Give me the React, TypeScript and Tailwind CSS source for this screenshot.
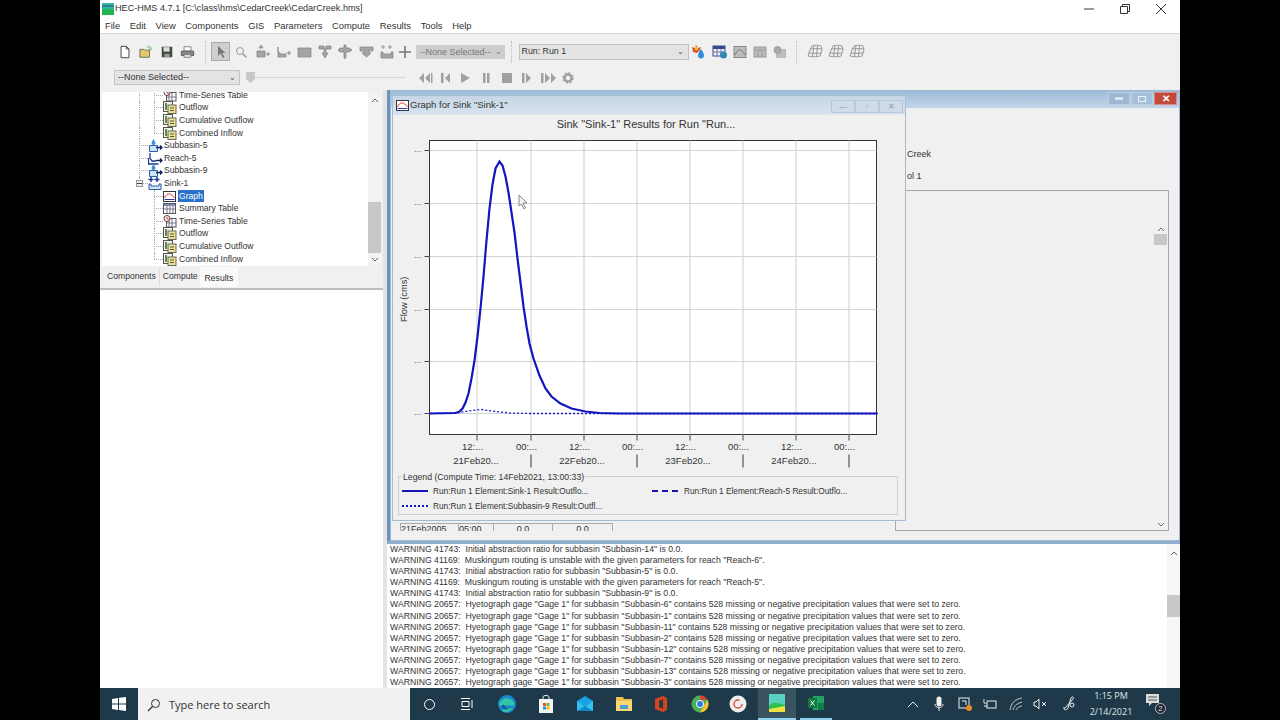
import React from "react";

const F = "font-['Liberation_Sans',Arial,sans-serif]";

const grayIcons = [
  "M6 1l2 3H4zM2 7h8v6H2zM10 10h4M12.500 8l2 2-2 2",
  "M2 3v5h1l2 2h5v3H2zM10 9h4M12.500 7l2 2-2 2",
  "M2 4h13v9H2z",
  "M2 2h5v2h2V2h5v3H9v4h2l-3 5-3-5h2V5H2z",
  "M7 1v3H3L1 6l2 2h4v5l1 2 1-2V8h3l3-2-3-2H9V1z",
  "M2 3h13v4H11v2h2l-4.500 4L4 9h2V7H2z",
  "M4 1v4M2 3h4M11 1v4M9 3h4M2 8h2v2h8V8h2v6H2z",
];

function DocIcon() {
  return (
    <svg width="14" height="13" viewBox="0 0 14 13" className="shrink-0">
      <rect x="0.5" y="0.5" width="9" height="10" fill="#f4f4e8" stroke="#555" />
      <rect x="2" y="2" width="2" height="7" fill="#5d8a5d" />
      <rect x="5" y="4" width="8" height="8.5" fill="#ece48c" stroke="#666" />
      <path d="M7 7h4M7 9.500h4" stroke="#555" />
    </svg>
  );
}
function GraphIcon() {
  return (
    <svg width="14" height="13" viewBox="0 0 14 13" className="shrink-0">
      <rect x="0.5" y="1.500" width="12" height="10" fill="#fff" stroke="#334" />
      <path d="M1.500 8C4 2 8 3 11.500 8" stroke="#d33" fill="none" />
      <path d="M1.500 9.500h10" stroke="#33a" />
    </svg>
  );
}
function TableIcon() {
  return (
    <svg width="14" height="13" viewBox="0 0 14 13" className="shrink-0">
      <rect x="0.5" y="1.500" width="12" height="10" fill="#fff" stroke="#556" />
      <rect x="1" y="2" width="11" height="2" fill="#7c8cab" />
      <path d="M4 4v7M7 4v7M10 4v7M1 7h11" stroke="#778" />
    </svg>
  );
}
function TimeIcon() {
  return (
    <svg width="14" height="13" viewBox="0 0 14 13" className="shrink-0">
      <rect x="3.500" y="3.500" width="9.500" height="8.500" fill="#fff" stroke="#556" />
      <path d="M6 4v8M9 4v8M3 8h10" stroke="#778" />
      <circle cx="4" cy="3.500" r="3" fill="#fff" stroke="#633" />
      <path d="M4 2v2h2" stroke="#c33" fill="none" />
    </svg>
  );
}
function ElemIcon({ kind }: { kind: "sub" | "reach" | "sink" }) {
  return (
    <svg width="15" height="13" viewBox="0 0 15 13" className="shrink-0">
      {kind === "sub" && <path d="M5.500 0C4.500 2 3.500 3 3.500 4a2 2 0 0 0 4 0C7.500 3 6.500 2 5.500 0z" fill="#3a8fdc" />}
      {kind === "sink" && <path d="M3 0v5M.5 2.500h5M9 0v5M6.500 2.500h5" stroke="#123a8a" strokeWidth="1.400" />}
      {kind === "reach" ? (
        <path d="M2 1v5l2 3h4M0.500 6v6h10" stroke="#16398c" strokeWidth="1.300" fill="none" />
      ) : kind === "sub" ? (
        <path d="M1.500 6.500v6h8v-6z" fill="#cfe4f6" stroke="#2d5fa8" />
      ) : (
        <path d="M1 7v5.500h12V7h-2v2H3V7z" fill="#cfe4f6" stroke="#2d5fa8" />
      )}
      {kind !== "sink" && <path d="M8 8.500h6M12 6.500l2 2-2 2" stroke="#10205e" strokeWidth="1.300" fill="none" />}
    </svg>
  );
}

function Leaf({ label, icon, sel, last, outer }: { label: string; icon: React.ReactNode; sel?: boolean; last?: boolean; outer?: boolean }) {
  return (
    <div className="h-[12.6px] flex items-center pl-[52px] relative">
      {outer && <span className="absolute left-[37px] top-0 bottom-0 border-l border-dotted border-[#aaa]" />}
      <span className={last ? "absolute left-[52px] top-0 h-1/2 border-l border-dotted border-[#aaa]" : "absolute left-[52px] top-0 bottom-0 border-l border-dotted border-[#aaa]"} />
      <span className="w-[9px] border-b border-dotted border-[#aaa] shrink-0" />
      {icon}
      <span className={sel ? "ml-[1px] px-[1px] bg-[#2a6fc9] text-white leading-[12px]" : "ml-[1px] px-[1px]"}>{label}</span>
    </div>
  );
}
function Elem({ label, kind, exp }: { label: string; kind: "sub" | "reach" | "sink"; exp?: boolean }) {
  return (
    <div className="h-[12.6px] flex items-center pl-[37px] relative">
      <span className={exp ? "absolute left-[37px] top-0 h-1/2 border-l border-dotted border-[#aaa]" : "absolute left-[37px] top-0 bottom-0 border-l border-dotted border-[#aaa]"} />
      {exp ? (
        <span className="absolute left-[34px] w-[7px] h-[7px] border border-[#999] bg-[#eee] flex items-center justify-center">
          <span className="w-[5px] h-px bg-[#444]" />
        </span>
      ) : null}
      <span className="w-[9px] border-b border-dotted border-[#aaa] shrink-0" />
      <ElemIcon kind={kind} />
      <span className="ml-[1px]">{label}</span>
    </div>
  );
}

const WARN = [
  'WARNING 41743:  Initial abstraction ratio for subbasin "Subbasin-14" is 0.0.',
  'WARNING 41169:  Muskingum routing is unstable with the given parameters for reach "Reach-6".',
  'WARNING 41743:  Initial abstraction ratio for subbasin "Subbasin-5" is 0.0.',
  'WARNING 41169:  Muskingum routing is unstable with the given parameters for reach "Reach-5".',
  'WARNING 41743:  Initial abstraction ratio for subbasin "Subbasin-9" is 0.0.',
  'WARNING 20657:  Hyetograph gage "Gage 1" for subbasin "Subbasin-6" contains 528 missing or negative precipitation values that were set to zero.',
  'WARNING 20657:  Hyetograph gage "Gage 1" for subbasin "Subbasin-1" contains 528 missing or negative precipitation values that were set to zero.',
  'WARNING 20657:  Hyetograph gage "Gage 1" for subbasin "Subbasin-11" contains 528 missing or negative precipitation values that were set to zero.',
  'WARNING 20657:  Hyetograph gage "Gage 1" for subbasin "Subbasin-2" contains 528 missing or negative precipitation values that were set to zero.',
  'WARNING 20657:  Hyetograph gage "Gage 1" for subbasin "Subbasin-12" contains 528 missing or negative precipitation values that were set to zero.',
  'WARNING 20657:  Hyetograph gage "Gage 1" for subbasin "Subbasin-7" contains 528 missing or negative precipitation values that were set to zero.',
  'WARNING 20657:  Hyetograph gage "Gage 1" for subbasin "Subbasin-13" contains 528 missing or negative precipitation values that were set to zero.',
  'WARNING 20657:  Hyetograph gage "Gage 1" for subbasin "Subbasin-3" contains 528 missing or negative precipitation values that were set to zero.',
];

const CURVE =
  "M0 273L26 272.500L30 271L33 268L36 262L39 253L42 238L45 220L48 196L51 168L54 136L57 100L60 68L63 44L66 28L70 21L73 25L76 36L79 52L82 72L85 92L88 118L91 142L94 166L97 186L100 203L104 218L110 235L116 248L122 256L131 263L142 268L156 271L170 272.500L190 273L448 273";
const DOT = "M0 273L30 272L42 270L52 269L62 270.500L80 272.500L100 273L448 273";

function Chart() {
  const vx = [47.5, 101.5, 154.5, 207.5, 260.5, 313.5, 366.5, 419.5];
  const hy = [10, 63, 116, 169, 221, 273];
  return (
    <svg width="512" height="336" viewBox="0 0 512 336" className="block">
      <g transform="translate(36.5,0.5)">
        <rect x="0" y="0" width="447" height="294" fill="#fff" stroke="#333" />
        {vx.map((x) => (
          <path key={x} d={`M${x} 0V294`} stroke="#cccccc" />
        ))}
        {hy.map((y) => (
          <path key={y} d={`M0 ${y}H447`} stroke="#d4d4d4" />
        ))}
        <path d={DOT} stroke="#1a1ad0" fill="none" strokeWidth="1.300" strokeDasharray="2 2" />
        <path d={CURVE} stroke="#1414c0" fill="none" strokeWidth="2.200" />
        {vx.map((x) => (
          <path key={x} d={`M${x} 294v6`} stroke="#444" />
        ))}
        {hy.map((y) => (
          <path key={y} d={`M-5 ${y}H0`} stroke="#444" />
        ))}
        {[101.5, 207.5, 313.5, 419.5].map((x) => (
          <path key={x} d={`M${x} 314v13`} stroke="#333" />
        ))}
      </g>
      <g fontFamily="'Liberation Sans',Arial,sans-serif" fontSize="9.500" fill="#333">
        {hy.map((y) => (
          <text key={y} x="21" y={y + 2} fontSize="9" fill="#666">...</text>
        ))}
        {vx.map((x, i) => (
          <text key={x} x={x + 36} y="310" textAnchor="middle" dx="-4">
            {i % 2 ? "00:..." : "12:..."}
          </text>
        ))}
        {["21Feb20...", "22Feb20...", "23Feb20...", "24Feb20..."].map((t, i) => (
          <text key={t} x={[83, 189, 295, 401][i]} y="324" textAnchor="middle">{t}</text>
        ))}
        <text transform="translate(14,182) rotate(-90)" fontSize="9.300">Flow (cms)</text>
      </g>
    </svg>
  );
}

function WinBtns() {
  return (
    <div className="flex items-start h-[13px] gap-px">
      <span className="w-[22px] h-[13px] bg-[#9cb8d4] border border-[#bcd0e2] flex items-center justify-center">
        <span className="w-[8px] h-[3px] bg-[#dbe5ee]" />
      </span>
      <span className="w-[22px] h-[13px] bg-[#a4bfd9] border border-[#bcd0e2] flex items-center justify-center">
        <span className="w-[8px] h-[6px] border border-[#eef3f8]" />
      </span>
      <span className="w-[23px] h-[13px] bg-[#c24a3a] border border-[#d88] flex items-center justify-center text-white text-[10px] font-bold leading-none">✕</span>
    </div>
  );
}

function ToolbarA() {
  return (
    <div className="h-[35px] flex items-center pl-[17px]">
      <svg width="14" height="14" viewBox="0 0 16 16" className="ml-[1px] mr-[7px]"><path d="M3.500 1.500h6l3 3v10h-9z" fill="#fff" stroke="#333" /><path d="M9.500 1.500v3h3" fill="none" stroke="#333" /></svg>
      <svg width="14" height="14" viewBox="0 0 16 16" className="mr-[7px]"><path d="M1 14V5h5l1 1h5v8z" fill="#e4c96a" stroke="#665" /><path d="M9 3c2-2 4-1 5 1l-1 2-1-2" fill="none" stroke="#3a3" /></svg>
      <svg width="14" height="14" viewBox="0 0 16 16" className="mr-[6px]"><path d="M2 2h12v12H2z" fill="#3d4a3d" /><rect x="4" y="2.500" width="7" height="5" fill="#ddd" /><rect x="5" y="10" width="6" height="4" fill="#999" /></svg>
      <svg width="15" height="14" viewBox="0 0 16 16" className="mr-[10px]"><path d="M4 2h8v5H4z" fill="#fff" stroke="#777" /><path d="M1 7h14v5H1z" fill="#888" stroke="#555" /><path d="M4 11h8v3H4z" fill="#eee" stroke="#777" /></svg>
      <span className="h-[22px] border-l border-dotted border-[#bbb] mr-[5px]" />
      <span className="w-[19px] h-[19px] bg-[#cfcfcf] border border-[#aaa] flex items-center justify-center mr-[4px]">
        <svg width="12" height="14" viewBox="0 0 12 14"><path d="M3 1v10l2.500-2.500L8 13l1.500-1L7 8h3.500z" fill="#777" /></svg>
      </span>
      <svg width="14" height="14" viewBox="0 0 14 14" className="mr-[7px]"><circle cx="6" cy="6" r="3.500" fill="none" stroke="#999" /><path d="M8.500 8.500l4 4" stroke="#999" strokeWidth="1.400" /></svg>
      <span className="flex gap-[4.6px] items-center">
        {grayIcons.map((d) => (
          <svg key={d} width="16" height="16" viewBox="0 0 16 16" className="shrink-0">
            <path d={d} stroke="#888" strokeWidth="0.800" fill="#a4a4a4" />
          </svg>
        ))}
      </span>
      <svg width="14" height="14" viewBox="0 0 14 14" className="ml-[3px]"><path d="M7 1v12M1 7h12" stroke="#777" strokeWidth="1.600" /></svg>
      <span className="ml-[4px] w-[89px] h-[14px] bg-[#cdcdcd] text-[#777] text-[9px] leading-[14px] pl-[4px] flex items-center justify-between pr-[3px]">
        --None Selected--<span className="text-[8px]">⌄</span>
      </span>
      <span className="h-[22px] border-l border-dotted border-[#bbb] ml-[6px] mr-[7px]" />
      <span className="w-[170px] h-[16px] bg-[#e3e3e3] border border-[#c4c4c4] text-[8.8px] text-[#333] pl-[2px] flex items-center justify-between pr-[4px]">
        Run: Run 1<span className="text-[8px] text-[#555]">⌄</span>
      </span>
      <svg width="15" height="15" viewBox="0 0 15 15" className="ml-[2px]"><path d="M1 3l3 1 1-3 2 3 3-1-1 3-3 3-4-1z" fill="#d8582a" /><path d="M4 3h3v3H4z" fill="#f3c53c" /><path d="M10 5c-2 3-3 5-3 6.500a3 3 0 0 0 6 0c0-1.500-1-3.500-3-6.500z" fill="#2f8fd8" /></svg>
      <svg width="15" height="14" viewBox="0 0 15 14" className="ml-[6px]"><rect x="1" y="1" width="12" height="10" fill="#eef" stroke="#334e8c" /><rect x="1" y="1" width="12" height="3" fill="#334e8c" /><path d="M5 4v7M9 4v7M1 7h12" stroke="#779" /><circle cx="11.500" cy="10" r="3.500" fill="#2d8ab0" /></svg>
      <svg width="14" height="14" viewBox="0 0 14 14" className="ml-[6px]"><rect x="1" y="1.500" width="12" height="11" fill="#bcbcbc" stroke="#888" /><path d="M2 10c3-7 6-7 10 0" fill="none" stroke="#777" /></svg>
      <svg width="14" height="14" viewBox="0 0 14 14" className="ml-[6px]"><rect x="1" y="2" width="12" height="10" fill="#bcbcbc" stroke="#999" /><path d="M1 5h12M5 5v7M9 5v7" stroke="#999" /></svg>
      <svg width="14" height="14" viewBox="0 0 14 14" className="ml-[6px]"><rect x="3" y="4" width="10" height="9" fill="#bcbcbc" /><circle cx="4.500" cy="5" r="3.500" fill="#aaa" stroke="#999" /></svg>
      <span className="h-[22px] border-l border-dotted border-[#bbb] ml-[9px] mr-[10px]" />
      {[0, 1, 2].map((k) => (
        <svg key={k} width="16" height="15" viewBox="0 0 16 15" className="mr-[5px]"><path d="M5 2c3-1 6-1 9 0l1 4-2 6c-3 1-8 1-12 0l2-6z" fill="none" stroke="#999" /><path d="M7 1.500L5.500 12.500M10.500 1.500L9.500 12.500M3 5c4-.5 8-.5 12 0M2 9c4 .5 8 .5 12 0" stroke="#999" fill="none" /></svg>
      ))}
    </div>
  );
}

function ToolbarB() {
  const p = "#a0a0a0";
  return (
    <div className="h-[17px] flex items-center pl-[14px]">
      <span className="w-[126px] h-[15px] bg-[#e3e3e3] border border-[#c4c4c4] text-[9px] text-[#333] pl-[3px] flex items-center justify-between pr-[3px]">
        --None Selected--<span className="text-[8px] text-[#555]">⌄</span>
      </span>
      <span className="relative ml-[6px] w-[160px] h-[12px] flex items-center">
        <span className="w-full h-px bg-[#d6d6d6]" />
        <svg width="9" height="11" viewBox="0 0 9 11" className="absolute left-0 top-0"><path d="M0 0h9v7l-4.500 4L0 7z" fill="#c8c8c8" /></svg>
      </span>
      <svg width="160" height="12" viewBox="0 0 160 12" className="ml-[11px]">
        <path d="M7 1L2 6l5 5zM13 1L8 6l5 5z" fill={p} />
        <path d="M14 1h1.500v10H14z" fill={p} />
        <path d="M24 1h2.500v10H24zM33 1l-5 5 5 5z" fill={p} />
        <path d="M44 1l9 5-9 5z" fill={p} />
        <path d="M66 1h2.500v10H66zM70 1h2.500v10H70z" fill={p} />
        <rect x="85" y="1" width="10" height="10" fill={p} />
        <path d="M105 1h2.500v10H105zM109 1l5 5-5 5z" fill={p} />
        <path d="M124 1h2.500v10H124zM128 1l5 5-5 5zM134 1l5 5-5 5z" fill={p} />
        <circle cx="151" cy="6" r="3.500" fill="none" stroke={p} strokeWidth="2.500" />
        <circle cx="151" cy="6" r="5" fill="none" stroke={p} strokeWidth="1.500" strokeDasharray="2 1.900" />
      </svg>
    </div>
  );
}

function Taskbar() {
  return (
    <div className="h-[32px] shrink-0 bg-[#1e3a4a] flex items-center text-white relative">
      <span className="w-[38px] flex justify-center">
        <svg width="14" height="14" viewBox="0 0 14 14"><path d="M0 2l6-1v5.500H0zM7 .8L14 0v6.500H7zM0 7.500h6V13l-6-1zM7 7.500h7V14l-7-1z" fill="#fff" /></svg>
      </span>
      <div className="w-[272px] h-[32px] bg-[#f1f1f1] flex items-center pl-[9px] text-[#333] text-[11px] gap-[8px] pt-[2px]">
        <svg width="14" height="14" viewBox="0 0 14 14"><circle cx="8.500" cy="5.500" r="4" fill="none" stroke="#333" /><path d="M5.500 8.500L1 13" stroke="#333" strokeWidth="1.200" /></svg>
        <span className="font-['Open_Sans',sans-serif]">Type here to search</span>
      </div>
      <div className="flex items-center h-full">
        <span className="w-[38px] flex justify-center"><span className="w-[11px] h-[11px] rounded-full border-[1.5px] border-white" /></span>
        <span className="w-[38px] flex justify-center">
          <svg width="14" height="12" viewBox="0 0 14 12"><path d="M1 .5h9M1 11.500h9M2 3.500h7v5H2zM12 2v8" stroke="#fff" fill="none" /></svg>
        </span>
        <span className="w-[41px] flex justify-center">
          <svg width="20" height="20" viewBox="0 0 20 20"><circle cx="10" cy="10" r="9" fill="#1c87c9" /><path d="M2 11c1-6 7-8 11-6 3 1.500 5 4 4 6.500h-9c0 3 4 4 8 2-2 4-8 6-11 3.500 2 0 1-4-3-6z" fill="#2fc7a8" /><path d="M8 11.500c0 2 2 3 4 3-3 2-7 1-8-2 1-2 3-2 4-1z" fill="#0f5f9f" /></svg>
        </span>
        <span className="w-[37px] flex justify-center">
          <svg width="18" height="20" viewBox="0 0 18 20"><path d="M2 5h14v14H2z" fill="#f4f4f4" /><path d="M6 6V3c0-2 6-2 6 0v3" stroke="#eee" fill="none" /><rect x="6" y="9" width="3" height="3" fill="#e8572a" /><rect x="9.500" y="9" width="3" height="3" fill="#7cb82f" /><rect x="6" y="12.500" width="3" height="3" fill="#1e9be0" /><rect x="9.500" y="12.500" width="3" height="3" fill="#f6b900" /></svg>
        </span>
        <span className="w-[41px] flex justify-center">
          <svg width="18" height="18" viewBox="0 0 18 18"><path d="M1 6l8-5 8 5v10H1z" fill="#1ba1e2" /><path d="M1 6l8 6 8-6v10H1z" fill="#35c0f0" /><path d="M1 16l8-5 8 5z" fill="#0f87c9" /></svg>
        </span>
        <span className="w-[37px] flex justify-center">
          <svg width="18" height="16" viewBox="0 0 18 16"><path d="M1 1h7l1 2h8v12H1z" fill="#f0c04c" /><path d="M1 5h16v10H1z" fill="#f7d774" /><rect x="5" y="9" width="8" height="4" fill="#4a9fd8" /></svg>
        </span>
        <span className="w-[38px] flex justify-center">
          <svg width="14" height="18" viewBox="0 0 14 18"><path d="M1 4l8-3 4 2v12l-4 2-8-3z" fill="#d8431f" /><path d="M5 6v6l4 2V4z" fill="#1e3a4a" /></svg>
        </span>
        <span className="w-[39px] flex justify-center">
          <svg width="18" height="18" viewBox="0 0 18 18"><circle cx="9" cy="9" r="8.500" fill="#4caf50" /><path d="M9 .5a8.500 8.500 0 0 1 7.400 4.300H9z" fill="#e53935" /><path d="M16.400 4.800A8.500 8.500 0 0 1 9 17.500l3.500-6z" fill="#fbc02d" /><circle cx="9" cy="9" r="3.600" fill="#2a7de1" stroke="#fff" /></svg>
        </span>
        <span className="w-[38px] flex justify-center">
          <svg width="18" height="18" viewBox="0 0 18 18"><circle cx="9" cy="9" r="8.500" fill="#eee" /><circle cx="9" cy="9" r="4" fill="none" stroke="#d2503a" strokeWidth="1.400" strokeDasharray="20 5" /></svg>
        </span>
        <span className="w-[38px] ml-[1px] h-full bg-[#3a5360] flex justify-center items-center border-b-2 border-[#8fd0f0]">
          <svg width="16" height="18" viewBox="0 0 16 18"><rect width="16" height="18" fill="#5ad0c0" /><path d="M0 12c4-5 8-3 16-1v7H0z" fill="#2dc052" /><path d="M0 15l16-3v6H0z" fill="#f0e040" /></svg>
        </span>
        <span className="w-[32px] ml-[4px] h-full flex justify-center items-center border-b-2 border-[#8fd0f0]">
          <svg width="16" height="16" viewBox="0 0 16 16"><rect x="5" y="1" width="11" height="14" fill="#21a366" /><rect x="10" y="8" width="6" height="7" fill="#107c41" /><rect y="3" width="9" height="10" fill="#0f7a3d" /><path d="M2.500 5.500l4 5M6.500 5.500l-4 5" stroke="#fff" /></svg>
        </span>
      </div>
      <div className="ml-auto flex items-center h-full pr-[14px] text-[#dfe6ea]">
        <svg width="12" height="7" viewBox="0 0 12 7" className="mr-[15px]"><path d="M1 6l5-5 5 5" stroke="#eee" fill="none" /></svg>
        <svg width="10" height="16" viewBox="0 0 10 16" className="mr-[14px]"><rect x="2.500" y="0.500" width="5" height="10" rx="2.500" fill="#eee" /><path d="M1 8c0 5 8 5 8 0M5 12v3" stroke="#eee" fill="none" /></svg>
        <svg width="14" height="14" viewBox="0 0 14 14" className="mr-[11px]"><rect x="1" y="1" width="10" height="10" fill="none" stroke="#eee" /><path d="M4 4h4v4" stroke="#eee" fill="none" /><circle cx="11" cy="11" r="3" fill="#e98b21" /></svg>
        <svg width="14" height="12" viewBox="0 0 14 12" className="mr-[11.5px]"><rect x="4" y="3" width="9" height="7" fill="none" stroke="#eee" /><path d="M1 1v4h3M1 8h3" stroke="#eee" /></svg>
        <svg width="14" height="14" viewBox="0 0 14 14" className="mr-[10.5px]"><path d="M1 13C2 6 6 2 13 1M4 13c1-4 3-6 9-8M7 13c1-2 2-3 6-4" stroke="#ccc" fill="none" /></svg>
        <svg width="14" height="12" viewBox="0 0 14 12" className="mr-[15px]"><path d="M1 4h2l3-3v10L3 8H1z" fill="none" stroke="#eee" /><path d="M9 4l4 4M13 4l-4 4" stroke="#eee" /></svg>
        <svg width="14" height="16" viewBox="0 0 14 16" className="mr-[11px]"><path d="M2 13l9-10c2-2-1-3-2-1L6 12c-1 3-5 2-4-1" stroke="#eee" fill="none" /><circle cx="10" cy="9" r="2" fill="none" stroke="#eee" /></svg>
        <div className="w-[48px] text-center text-[9px] leading-[16px] font-['Open_Sans',sans-serif]">
          <div>1:15 PM</div>
          <div>2/14/2021</div>
        </div>
        <span className="relative ml-[11px] w-[20px] h-[20px]">
          <svg width="14" height="13" viewBox="0 0 14 13" className="absolute left-0 top-[0px]"><path d="M0 0h13v9H6l-3 3V9H0z" fill="#ddd" /><path d="M2 3h9M2 6h9" stroke="#555" /></svg>
          <span className="absolute right-[0px] bottom-[0px] w-[11px] h-[11px] rounded-full bg-[#223] border border-[#bbb] text-[8px] leading-[9px] text-center">2</span>
        </span>
      </div>
    </div>
  );
}

export default function App() {
  return (
    <div className={`w-[1280px] h-[720px] bg-black flex justify-center overflow-hidden ${F}`}>
      <div className="w-[1080px] h-full flex flex-col bg-[#f0f0f0] text-[#222]">
        {/* title bar */}
        <div className="h-[18px] shrink-0 bg-white flex items-center text-[9.1px] text-[#333] relative">
          <svg width="12" height="12" viewBox="0 0 12 12" className="ml-[2px] mr-[1px]"><rect width="12" height="12" fill="#35b5a8" /><path d="M0 8c3-4 6-2 12-1v5H0z" fill="#22b450" /><path d="M0 3h12" stroke="#1f4f80" /></svg>
          <span>HEC-HMS 4.7.1 [C:\class\hms\CedarCreek\CedarCreek.hms]</span>
          <div className="ml-auto flex items-center pr-[14px] gap-[26px] text-[#333]">
            <svg width="10" height="10" viewBox="0 0 10 10"><path d="M0 5h10" stroke="#333" /></svg>
            <svg width="10" height="10" viewBox="0 0 10 10"><path d="M2.500 2.500V.5h7v7h-2M.5 2.500h7v7h-7z" fill="none" stroke="#333" /></svg>
            <svg width="10" height="10" viewBox="0 0 10 10"><path d="M0 0l10 10M10 0L0 10" stroke="#333" /></svg>
          </div>
        </div>
        {/* menu */}
        <div className="h-[16px] shrink-0 bg-white flex items-center pl-[5px] pt-[1px] text-[9.4px] text-[#333] border-b border-[#d8d8d8] gap-[9.65px]">
          {["File", "Edit", "View", "Components", "GIS", "Parameters", "Compute", "Results", "Tools", "Help"].map((m) => (
            <span key={m}>{m}</span>
          ))}
        </div>
        <div className="h-[56px] shrink-0 bg-[#f0f0f0] text-[#333]">
          <ToolbarA />
          <ToolbarB />
        </div>
        {/* content */}
        <div className="flex-1 min-h-0 flex">
          <div className="w-[283px] shrink-0 flex flex-col">
            <div className="h-[177px] shrink-0 bg-[#f0f0f0] px-[2px] pt-[2px] pb-[2px]">
              <div className="h-[174px] bg-white flex overflow-hidden">
                <div className="flex-1 text-[8.6px] text-[#333] overflow-hidden -mt-[3px]">
                  <Leaf outer label="Time-Series Table" icon={<TimeIcon />} />
                  <Leaf outer label="Outflow" icon={<DocIcon />} />
                  <Leaf outer label="Cumulative Outflow" icon={<DocIcon />} />
                  <Leaf outer last label="Combined Inflow" icon={<DocIcon />} />
                  <Elem label="Subbasin-5" kind="sub" />
                  <Elem label="Reach-5" kind="reach" />
                  <Elem label="Subbasin-9" kind="sub" />
                  <Elem label="Sink-1" kind="sink" exp />
                  <Leaf label="Graph" icon={<GraphIcon />} sel />
                  <Leaf label="Summary Table" icon={<TableIcon />} />
                  <Leaf label="Time-Series Table" icon={<TimeIcon />} />
                  <Leaf label="Outflow" icon={<DocIcon />} />
                  <Leaf label="Cumulative Outflow" icon={<DocIcon />} />
                  <Leaf last label="Combined Inflow" icon={<DocIcon />} />
                </div>
                <div className="w-[13px] shrink-0 bg-[#f2f2f2] flex flex-col items-center text-[#666]">
                  <svg width="8" height="5" viewBox="0 0 8 5" className="mt-[6px]"><path d="M1 4l3-3 3 3" fill="none" stroke="#666" /></svg>
                  <div className="flex-1 w-full flex flex-col justify-end">
                    <div className="h-[51px] w-full bg-[#c8c8c8]" />
                  </div>
                  <svg width="8" height="5" viewBox="0 0 8 5" className="my-[4px]"><path d="M1 1l3 3 3-3" fill="none" stroke="#666" /></svg>
                </div>
              </div>
            </div>
            <div className="h-[21px] shrink-0 flex items-start text-[8.6px] text-[#333] pl-[1px]">
              <span className="h-[19px] pl-[6px] pr-[3px] flex items-center border-r border-[#ddd]">Components</span>
              <span className="h-[19px] pl-[3px] pr-[2px] flex items-center">Compute</span>
              <span className="h-[20px] px-[5px] pt-[2px] bg-[#fafafa] flex items-center">Results</span>
            </div>
            <div className="flex-1 bg-white border-t-2 border-[#bdbdbd]" />
          </div>
          <div className="w-[4px] shrink-0 bg-[#e4e4e4]" />
          <div className="flex-1 min-w-0 flex flex-col">
            {/* desktop */}
            <div className="h-[451px] shrink-0 relative bg-[#6d93b8] overflow-hidden">
              {/* back window */}
              <div className="absolute left-[3px] top-0 right-0 bottom-0 bg-[#f0f0f0] border border-[#9db9d4] flex flex-col">
                <div className="h-[17px] shrink-0 bg-gradient-to-b from-[#9dbcda] to-[#c2d6e8] flex justify-end pr-[2px] pt-[1px]">
                  <WinBtns />
                </div>
                <div className="flex-1 pl-[516px] pr-[10px] pb-[9px] text-[9px] text-[#333] flex flex-col">
                  <div className="h-[22px] mt-[40px]">Creek</div>
                  <div className="h-[20px]">ol 1</div>
                  <div className="flex-1 -ml-[12px] border border-[#a8a8a8] flex justify-end pr-px relative">
                    <div className="w-[13px] flex flex-col items-center mt-[36px]">
                      <svg width="8" height="5" viewBox="0 0 8 5"><path d="M1 4l3-3 3 3" fill="none" stroke="#666" /></svg>
                      <div className="w-full h-[11px] mt-[2px] bg-[#c8c8c8]" />
                      <div className="flex-1" />
                      <svg width="8" height="5" viewBox="0 0 8 5" className="mb-[3px]"><path d="M1 1l3 3 3-3" fill="none" stroke="#666" /></svg>
                    </div>
                  </div>
                </div>
              </div>
              {/* stray table row */}
              <div className="absolute left-[13px] top-[433px] h-[8px] flex text-[9px] leading-[10px] text-[#333] border-t border-[#aaa] overflow-hidden">
                <span className="w-[59px] border-x border-[#aaa]">21Feb2005</span>
                <span className="w-[35px] border-r border-[#aaa]">05:00</span>
                <span className="w-[59px] border-r border-[#aaa] text-center">0.0</span>
                <span className="w-[60px] border-r border-[#aaa] text-center">0.0</span>
              </div>
              {/* graph window */}
              <div className="absolute left-[5px] top-[5px] w-[514px] h-[426px] bg-[#f0f0f0] border border-[#a3bcd4] flex flex-col rounded-t-[3px]">
                <div className="h-[19px] shrink-0 bg-gradient-to-b from-[#c7d6e6] to-[#d6e2ee] flex items-center pl-[3px] text-[9.5px] text-[#333] gap-0 border-b border-[#dde5ee]">
                  <GraphIcon />
                  <span>Graph for Sink "Sink-1"</span>
                  <div className="ml-auto flex mr-[2px] mt-[2px]">
                    {["—", "▫", "✕"].map((g) => (
                      <span key={g} className="w-[24px] h-[13px] bg-[#cfdbe8] border border-[#b9c8d8] text-[#99a] text-[8px] leading-[11px] text-center">{g}</span>
                    ))}
                  </div>
                </div>
                <div className="h-[25px] shrink-0 flex items-start justify-center text-[11px] leading-[13px] text-[#333] pt-[3px] pr-[6px]">
                  Sink "Sink-1" Results for Run "Run...
                </div>
                <div className="shrink-0">
                  <Chart />
                </div>
                <div className="relative ml-[5px] mr-[7px] h-[39px] border border-[#cfcfcf] text-[8.3px] text-[#333]">
                  <span className="absolute left-[3px] -top-[5px] bg-[#f0f0f0] px-px leading-[10px] text-[8.7px]">Legend (Compute Time: 14Feb2021, 13:00:33)</span>
                  <div className="grid grid-cols-[250px_1fr] pl-[3px] pt-[9px] gap-y-[5px] leading-[10px]">
                    <div className="flex items-center gap-[5px]"><span className="w-[26px] h-[1.500px] bg-[#1414b8]" />Run:Run 1 Element:Sink-1 Result:Outflo...</div>
                    <div className="flex items-center gap-[6px]"><span className="w-[26px] border-t-2 border-dashed border-[#1414b8]" />Run:Run 1 Element:Reach-5 Result:Outflo...</div>
                    <div className="flex items-center gap-[5px]"><span className="w-[26px] border-t-2 border-dotted border-[#1414b8]" />Run:Run 1 Element:Subbasin-9 Result:Outfl...</div>
                  </div>
                </div>
              </div>
              {/* cursor */}
              <svg width="11" height="16" viewBox="0 0 11 16" className="absolute left-[131px] top-[104px]"><path d="M1 1v11l2.500-2L6 15l1.500-1L5 9h4z" fill="#f4f4f4" stroke="#888" /></svg>
            </div>
            <div className="h-[3px] shrink-0 bg-[#8fb0cc]" />
            {/* log */}
            <div className="flex-1 min-h-0 bg-white flex overflow-hidden">
              <div className="flex-1 pl-[3px] text-[8.7px] leading-[11.1px] text-[#333] whitespace-pre overflow-hidden">
                {WARN.map((w) => (
                  <div key={w}>{w}</div>
                ))}
              </div>
              <div className="w-[13px] shrink-0 bg-[#f6f6f6] flex flex-col items-center">
                <svg width="8" height="5" viewBox="0 0 8 5" className="mt-[7px]"><path d="M1 4l3-3 3 3" fill="none" stroke="#666" /></svg>
                <div className="w-full h-[22px] mt-[39px] bg-[#c8c8c8]" />
              </div>
            </div>
          </div>
        </div>
        <Taskbar />
      </div>
    </div>
  );
}
